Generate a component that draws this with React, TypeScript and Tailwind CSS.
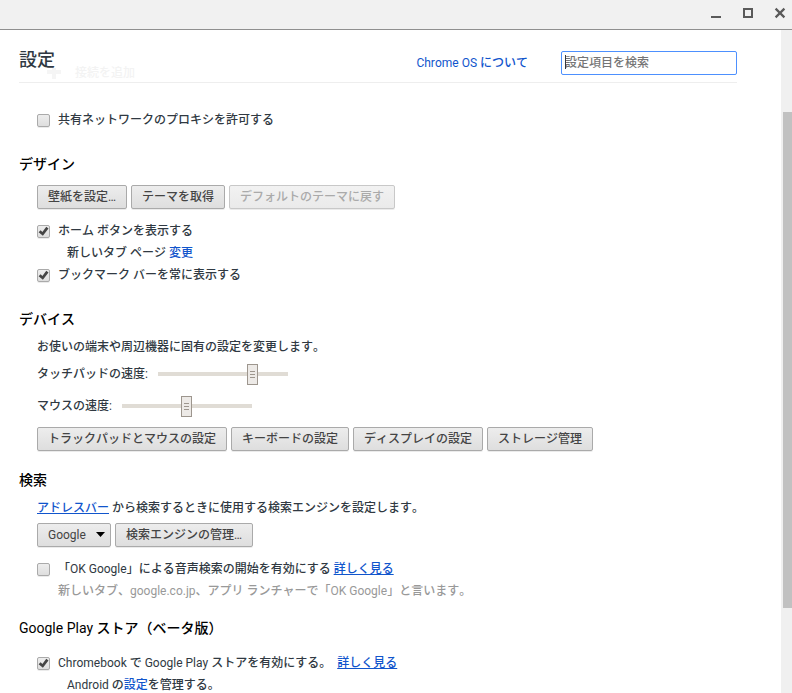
import type { ReactNode } from "react";

function WindowBar() {
  return (
    <div className="flex h-[30px] shrink-0 items-center justify-end gap-[18px] border-b border-[#8f8f8f] bg-[#f1f1f1] pr-[5px] pb-[3px]">
      <button aria-label="最小化" className="h-3.5 w-3.5">
        <svg viewBox="0 0 14 14" className="h-3.5 w-3.5" fill="#5a5a5a">
          <rect x="2" y="10" width="10" height="2" />
        </svg>
      </button>
      <button aria-label="最大化" className="h-3.5 w-3.5">
        <svg viewBox="0 0 14 14" className="h-3.5 w-3.5" fill="none" stroke="#5a5a5a" strokeWidth="2">
          <rect x="3" y="3" width="8" height="8" />
        </svg>
      </button>
      <button aria-label="閉じる" className="h-3.5 w-3.5">
        <svg viewBox="0 0 14 14" className="h-3.5 w-3.5" fill="none" stroke="#5a5a5a" strokeWidth="2.2">
          <path d="M2.6 2.6l8.8 8.8M11.4 2.6l-8.8 8.8" />
        </svg>
      </button>
    </div>
  );
}

function Heading({ children }: { children: ReactNode }) {
  return <h2 className="text-sm leading-[22px] text-black">{children}</h2>;
}

function Button({ children, disabled }: { children: ReactNode; disabled?: boolean }) {
  return (
    <button
      disabled={disabled}
      className="h-6 rounded-xs border border-[#aaa] bg-linear-to-b from-[#ededed] to-[#dedede] px-2.5 leading-5 whitespace-nowrap text-[#444] shadow-[0_1px_0_rgba(0,0,0,0.08)] disabled:border-[#c8c8c8] disabled:from-[#f2f2f2] disabled:to-[#eaeaea] disabled:text-[#aaa]"
    >
      {children}
    </button>
  );
}

function Checkbox({ id, checked, children }: { id: string; checked?: boolean; children: ReactNode }) {
  return (
    <div className="flex h-[22px] items-center gap-2">
      <span className="relative h-[13px] w-[13px] shrink-0">
        <input
          id={id}
          type="checkbox"
          defaultChecked={checked}
          className="peer block h-[13px] w-[13px] appearance-none rounded-xs border border-[#aaa] bg-linear-to-b from-[#ededed] to-[#dedede] shadow-[0_1px_0_rgba(0,0,0,0.08)]"
        />
        <svg
          viewBox="0 0 13 13"
          className="pointer-events-none absolute inset-0 hidden h-[13px] w-[13px] peer-checked:block"
          fill="#444"
        >
          <path d="M1.6 7.2l2-1.9 1.8 1.6L9.3 1.8l2.2 1.7-5.6 7.3z" />
        </svg>
      </span>
      {children}
    </div>
  );
}

function Slider({ id, label, value }: { id: string; label: string; value: number }) {
  return (
    <div className="flex h-[22px] items-center gap-2.5">
      <label htmlFor={id}>{label}</label>
      <input
        id={id}
        type="range"
        min={1}
        max={5}
        defaultValue={value}
        className="h-[21px] w-[130px] appearance-none bg-transparent [&::-webkit-slider-runnable-track]:h-1 [&::-webkit-slider-runnable-track]:bg-[#e0dcd5] [&::-webkit-slider-thumb]:-mt-2 [&::-webkit-slider-thumb]:h-[21px] [&::-webkit-slider-thumb]:w-[11px] [&::-webkit-slider-thumb]:appearance-none [&::-webkit-slider-thumb]:border [&::-webkit-slider-thumb]:border-[#9d968e] [&::-webkit-slider-thumb]:bg-[#edeae7] [&::-webkit-slider-thumb]:bg-[linear-gradient(#9d968e_1px,transparent_1px,transparent_3px,#9d968e_3px,#9d968e_4px,transparent_4px,transparent_6px,#9d968e_6px)] [&::-webkit-slider-thumb]:bg-[length:5px_7px] [&::-webkit-slider-thumb]:bg-center [&::-webkit-slider-thumb]:bg-no-repeat"
      />
    </div>
  );
}

function Link({ children, underline }: { children: ReactNode; underline?: boolean }) {
  return (
    <a href="#" className={underline ? "text-[#1155cc] underline" : "text-[#1155cc]"}>
      {children}
    </a>
  );
}

export default function App() {
  return (
    <div
      className="flex h-screen flex-col bg-white font-[Roboto,'Noto_Sans_CJK_JP_Medium','Noto_Sans_CJK_JP',sans-serif] text-xs text-[#303942] [font-kerning:none]"
      lang="ja"
    >
      <WindowBar />
      <div className="flex min-h-0 flex-1">
        <main className="min-w-0 flex-1 overflow-y-auto pr-11 pl-[19px] leading-[22px] [scrollbar-width:none]">
          <header className="relative flex h-[53px] items-center border-b border-[#eee] pt-3.5">
            <h1 className="flex-1 pb-1.5 text-lg">設定</h1>
            <div className="absolute top-8 left-7 flex items-center gap-3.5 font-bold text-[#f3f3f3]">
              <svg viewBox="0 0 14 14" className="h-3.5 w-3.5" stroke="#f5f5f5" strokeWidth="4">
                <path d="M7 2v11M0 6h14" />
              </svg>
              接続を追加
            </div>
            <Link>Chrome OS について</Link>
            <div className="relative ml-[33px]">
              <input
                type="search"
                aria-label="設定項目を検索"
                placeholder="設定項目を検索"
                className="block h-6 w-44 rounded-xs border border-[#4d90fe] px-[3px] leading-5 outline-none placeholder:text-[#757575]"
              />
              <span className="absolute top-1 left-1 h-3.5 w-px bg-[#303942]" />
            </div>
          </header>

          <div className="mt-[26px] pl-[18px]">
            <Checkbox id="proxy">
              <label htmlFor="proxy">共有ネットワークのプロキシを許可する</label>
            </Checkbox>
          </div>

          <section className="mt-[22px]">
            <Heading>デザイン</Heading>
            <div className="mt-2.5 pl-[18px]">
              <div className="flex gap-1">
                <Button>壁紙を設定…</Button>
                <Button>テーマを取得</Button>
                <Button disabled>デフォルトのテーマに戻す</Button>
              </div>
              <div className="mt-[11px]">
                <Checkbox id="home" checked>
                  <label htmlFor="home">ホーム ボタンを表示する</label>
                </Checkbox>
                <p className="pl-[30px]">
                  新しいタブ ページ <Link>変更</Link>
                </p>
                <Checkbox id="bookmarks" checked>
                  <label htmlFor="bookmarks">ブックマーク バーを常に表示する</label>
                </Checkbox>
              </div>
            </div>
          </section>

          <section className="mt-[22px]">
            <Heading>デバイス</Heading>
            <div className="mt-1.5 pl-[18px]">
              <p className="mb-[5px]">お使いの端末や周辺機器に固有の設定を変更します。</p>
              <div className="flex flex-col gap-2.5">
                <Slider id="touchpad" label="タッチパッドの速度:" value={4} />
                <Slider id="mouse" label="マウスの速度:" value={3} />
              </div>
              <div className="mt-2.5 flex gap-1">
                <Button>トラックパッドとマウスの設定</Button>
                <Button>キーボードの設定</Button>
                <Button>ディスプレイの設定</Button>
                <Button>ストレージ管理</Button>
              </div>
            </div>
          </section>

          <section className="mt-[18px]">
            <Heading>検索</Heading>
            <div className="mt-1.5 pl-[18px]">
              <p className="mb-1">
                <Link underline>アドレスバー</Link> から検索するときに使用する検索エンジンを設定します。
              </p>
              <div className="flex gap-1">
                <div className="relative">
                  <select
                    aria-label="検索エンジン"
                    className="block h-6 w-[74px] appearance-none rounded-xs border border-[#aaa] bg-linear-to-b from-[#ededed] to-[#dedede] pr-5 pl-2.5 leading-5 text-[#444] shadow-[0_1px_0_rgba(0,0,0,0.08)]"
                  >
                    <option>Google</option>
                  </select>
                  <svg viewBox="0 0 9 5" className="pointer-events-none absolute top-[9px] right-1.5 h-[5px] w-[9px]">
                    <path d="M0 0h9L4.5 5z" />
                  </svg>
                </div>
                <Button>検索エンジンの管理…</Button>
              </div>
              <div className="mt-[11px]">
                <Checkbox id="hotword">
                  <span>
                    <label htmlFor="hotword">「OK Google」による音声検索の開始を有効にする</label>{" "}
                    <Link underline>詳しく見る</Link>
                  </span>
                </Checkbox>
                <p className="pl-[21px] text-[#999]">
                  新しいタブ、google.co.jp、アプリ ランチャーで「OK Google」と言います。
                </p>
              </div>
            </div>
          </section>

          <section className="mt-[15px]">
            <Heading>Google Play ストア（ベータ版）</Heading>
            <div className="mt-[13px] pl-[18px]">
              <Checkbox id="play" checked>
                <span className="flex gap-1.5">
                  <label htmlFor="play">Chromebook で Google Play ストアを有効にする。</label>
                  <Link underline>詳しく見る</Link>
                </span>
              </Checkbox>
              <p className="pl-[30px]">
                Android の<Link>設定</Link>を管理する。
              </p>
            </div>
          </section>
        </main>
        <div className="w-[11px] shrink-0 bg-[#f0f0f0] pt-[82px] pl-0.5" aria-hidden="true">
          <div className="h-[496px] bg-[#c1c1c1]" />
        </div>
      </div>
    </div>
  );
}
